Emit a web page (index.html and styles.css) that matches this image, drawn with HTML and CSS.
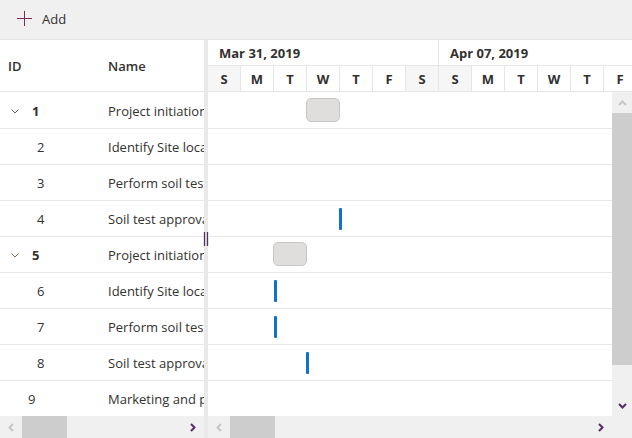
FILE: index.html
```html
<!DOCTYPE html>
<html>
<head>
<meta charset="utf-8">
<link rel="stylesheet" href="styles.css">
</head>
<body>
<div class="toolbar">
  <button class="add">
    <svg width="15" height="15" viewBox="0 0 15 15"><path d="M7.5 0V15M0 7.5H15" stroke="#7a2a55" stroke-width="1" fill="none"/></svg>
    <span>Add</span>
  </button>
</div>
<div class="main">
  <div class="grid">
    <div class="grid-head"><div class="h-id">ID</div><div class="h-name">Name</div></div>
    <div class="grid-body">
      <div class="row"><div class="cell-id parent"><svg class="chev" width="8" height="5" viewBox="0 0 8 5"><path d="M0.5 0.5L4 4L7.5 0.5" stroke="#5f6b78" fill="none"/></svg><b>1</b></div><div class="cell-name">Project initiation</div></div>
      <div class="row"><div class="cell-id child">2</div><div class="cell-name">Identify Site location</div></div>
      <div class="row"><div class="cell-id child">3</div><div class="cell-name">Perform soil test</div></div>
      <div class="row"><div class="cell-id child">4</div><div class="cell-name">Soil test approval</div></div>
      <div class="row"><div class="cell-id parent"><svg class="chev" width="8" height="5" viewBox="0 0 8 5"><path d="M0.5 0.5L4 4L7.5 0.5" stroke="#8a6a4a" fill="none"/></svg><b>5</b></div><div class="cell-name">Project initiation</div></div>
      <div class="row"><div class="cell-id child">6</div><div class="cell-name">Identify Site location</div></div>
      <div class="row"><div class="cell-id child">7</div><div class="cell-name">Perform soil test</div></div>
      <div class="row"><div class="cell-id child">8</div><div class="cell-name">Soil test approval</div></div>
      <div class="row"><div class="cell-id root">9</div><div class="cell-name">Marketing and presentation</div></div>
    </div>
    <div class="hscroll">
      <div class="sb-btn"><svg width="6" height="9" viewBox="0 0 6 9"><path d="M5 1L1.5 4.5L5 8" stroke="#c6c6c6" stroke-width="2" fill="none"/></svg></div>
      <div class="sb-thumb"></div>
      <div class="sb-track"></div>
      <div class="sb-btn"><svg width="6" height="9" viewBox="0 0 6 9"><path d="M1 1L4.5 4.5L1 8" stroke="#5b2a6b" stroke-width="2" fill="none"/></svg></div>
    </div>
  </div>
  <div class="splitter">
    <svg class="grip" width="6" height="14" viewBox="0 0 6 14"><path d="M1.5 0V14M4.5 0V14" stroke="#4e3560" stroke-width="1.3"/></svg>
  </div>
  <div class="gantt">
    <div class="tl-head">
      <div class="weeks"><div class="week">Mar 31, 2019</div><div class="week">Apr 07, 2019</div></div>
      <div class="days">
        <div class="day we">S</div><div class="day">M</div><div class="day">T</div><div class="day">W</div><div class="day">T</div><div class="day">F</div><div class="day we">S</div>
        <div class="day we">S</div><div class="day">M</div><div class="day">T</div><div class="day">W</div><div class="day">T</div><div class="day">F</div><div class="day we">S</div>
      </div>
    </div>
    <div class="gantt-mid">
      <div class="chart">
        <div class="crow"><div class="bar" style="left:98px;width:34px"></div></div>
        <div class="crow"></div>
        <div class="crow"></div>
        <div class="crow"><div class="mile" style="left:131px"></div></div>
        <div class="crow"><div class="bar" style="left:65px;width:34px"></div></div>
        <div class="crow"><div class="mile" style="left:66px"></div></div>
        <div class="crow"><div class="mile" style="left:66px"></div></div>
        <div class="crow"><div class="mile" style="left:98px"></div></div>
        <div class="crow"></div>
      </div>
      <div class="vscroll">
        <div class="vb-btn"><svg width="9" height="6" viewBox="0 0 9 6"><path d="M1 5L4.5 1.5L8 5" stroke="#c6c6c6" stroke-width="2" fill="none"/></svg></div>
        <div class="vb-thumb"></div>
        <div class="vb-track"></div>
        <div class="vb-btn"><svg width="9" height="6" viewBox="0 0 9 6"><path d="M1 1L4.5 4.5L8 1" stroke="#5b2a6b" stroke-width="2" fill="none"/></svg></div>
      </div>
    </div>
    <div class="gantt-foot">
      <div class="hscroll wide">
        <div class="sb-btn"><svg width="6" height="9" viewBox="0 0 6 9"><path d="M5 1L1.5 4.5L5 8" stroke="#c6c6c6" stroke-width="2" fill="none"/></svg></div>
        <div class="sb-thumb"></div>
        <div class="sb-track"></div>
        <div class="sb-btn"><svg width="6" height="9" viewBox="0 0 6 9"><path d="M1 1L4.5 4.5L1 8" stroke="#5b2a6b" stroke-width="2" fill="none"/></svg></div>
      </div>
      <div class="corner"></div>
    </div>
  </div>
</div>
</body>
</html>
```
FILE: styles.css
```css
html, body {
  margin: 0;
  padding: 0;
}
body {
  width: 632px;
  height: 438px;
  overflow: hidden;
  background: #fff;
  font-family: "Segoe UI", "Open Sans", "Noto Sans", sans-serif;
  font-size: 13px;
  color: #323130;
}
.toolbar {
  height: 40px;
  box-sizing: border-box;
  background: #f0f0f0;
  border-bottom: 1px solid #e6e6e6;
  display: flex;
  align-items: center;
  padding-left: 17px;
}
.add {
  display: flex;
  align-items: center;
  gap: 10px;
  background: none;
  border: 0;
  padding: 0 0 2px 0;
  font-family: inherit;
  font-size: 13px;
  color: #323130;
}
.add svg { display: block; }
.main {
  display: flex;
  height: 398px;
}
.grid {
  width: 204px;
  flex: none;
  display: flex;
  flex-direction: column;
}
.grid-head {
  height: 52px;
  box-sizing: border-box;
  border-bottom: 1px solid #e6e6e6;
  display: flex;
  align-items: center;
  font-weight: 600;
  font-size: 13px;
}
.h-id {
  width: 108px;
  padding-left: 8px;
  box-sizing: border-box;
}
.grid-body {
  flex: 1;
  overflow: hidden;
  padding-top: 1px;
}
.row {
  height: 36px;
  box-sizing: border-box;
  border-bottom: 1px solid #e8e8e8;
  display: flex;
  align-items: center;
  white-space: nowrap;
}
.cell-id {
  width: 108px;
  flex: none;
  box-sizing: border-box;
  display: flex;
  align-items: center;
}
.cell-id.parent { padding-left: 11px; }
.cell-id.parent .chev { margin-right: 13px; margin-top: 1px; }
.cell-id.parent b { font-weight: 700; }
.cell-id.child { padding-left: 37px; }
.cell-id.root { padding-left: 28px; }
.cell-name {
  flex: 1;
  overflow: hidden;
}
.hscroll {
  height: 22px;
  background: #f0f0f0;
  display: flex;
  flex: none;
}
.sb-btn {
  width: 22px;
  flex: none;
  display: flex;
  align-items: center;
  justify-content: center;
}
.sb-thumb {
  width: 45px;
  flex: none;
  background: #cdcdcd;
}
.sb-track { flex: 1; }
.splitter {
  width: 4px;
  flex: none;
  background: #e9e9e9;
  position: relative;
}
.grip {
  position: absolute;
  left: -1px;
  top: 192px;
  display: block;
}
.gantt {
  flex: 1;
  min-width: 0;
  display: flex;
  flex-direction: column;
}
.tl-head {
  flex: none;
  overflow: hidden;
  font-weight: 700;
}
.weeks, .days {
  display: flex;
  height: 26px;
  box-sizing: border-box;
  border-bottom: 1px solid #e6e6e6;
}
.week {
  width: 231px;
  flex: none;
  box-sizing: border-box;
  border-right: 1px solid #e6e6e6;
  padding-left: 11px;
  display: flex;
  align-items: center;
}
.day {
  width: 33px;
  flex: none;
  box-sizing: border-box;
  border-right: 1px solid #e6e6e6;
  display: flex;
  align-items: center;
  justify-content: center;
}
.day.we { background: #f6f6f6; }
.gantt-mid {
  flex: 1;
  display: flex;
  min-height: 0;
}
.chart {
  flex: 1;
  overflow: hidden;
  padding-top: 1px;
}
.crow {
  height: 36px;
  box-sizing: border-box;
  border-bottom: 1px solid #e8e8e8;
  position: relative;
}
.bar {
  position: absolute;
  top: 5px;
  height: 24px;
  box-sizing: border-box;
  background: #dfdedd;
  border: 1px solid #c9c7c5;
  border-radius: 5px;
}
.mile {
  position: absolute;
  top: 7px;
  width: 3px;
  height: 22px;
  background: #1272c9;
  border-radius: 1px;
}
.vscroll {
  width: 20px;
  flex: none;
  background: #f0f0f0;
  display: flex;
  flex-direction: column;
}
.vb-btn {
  height: 21px;
  flex: none;
  display: flex;
  align-items: center;
  justify-content: center;
}
.vb-thumb {
  height: 252px;
  flex: none;
  background: #cdcdcd;
}
.vb-track { flex: 1; }
.gantt-foot {
  display: flex;
  flex: none;
}
.hscroll.wide { flex: 1; }
.corner {
  width: 20px;
  height: 22px;
  background: #f0f0f0;
}
```
